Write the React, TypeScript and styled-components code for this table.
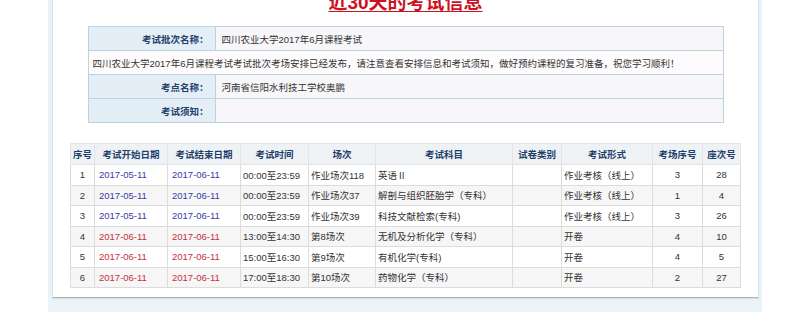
import React from "react";
import styled, { createGlobalStyle } from "styled-components";

const GlobalStyle = createGlobalStyle`
  html, body {
    margin: 0;
    padding: 0;
    background: #ffffff;
    overflow: hidden;
  }
  body {
    font-family: "Liberation Sans", "Noto Sans CJK SC", sans-serif;
    font-size: 9.5px;
    color: #333333;
  }
`;

type Exam = {
  no: number;
  start: string;
  end: string;
  time: string;
  session: string;
  subject: string;
  paper: string;
  form: string;
  room: string;
  seat: string;
  late: boolean;
};

const exams: Exam[] = [
  { no: 1, start: "2017-05-11", end: "2017-06-11", time: "00:00至23:59", session: "作业场次118", subject: "英语Ⅱ", paper: "", form: "作业考核（线上）", room: "3", seat: "28", late: false },
  { no: 2, start: "2017-05-11", end: "2017-06-11", time: "00:00至23:59", session: "作业场次37", subject: "解剖与组织胚胎学（专科）", paper: "", form: "作业考核（线上）", room: "1", seat: "4", late: false },
  { no: 3, start: "2017-05-11", end: "2017-06-11", time: "00:00至23:59", session: "作业场次39", subject: "科技文献检索(专科)", paper: "", form: "作业考核（线上）", room: "3", seat: "26", late: false },
  { no: 4, start: "2017-06-11", end: "2017-06-11", time: "13:00至14:30", session: "第8场次", subject: "无机及分析化学（专科）", paper: "", form: "开卷", room: "4", seat: "10", late: true },
  { no: 5, start: "2017-06-11", end: "2017-06-11", time: "15:00至16:30", session: "第9场次", subject: "有机化学(专科)", paper: "", form: "开卷", room: "4", seat: "5", late: true },
  { no: 6, start: "2017-06-11", end: "2017-06-11", time: "17:00至18:30", session: "第10场次", subject: "药物化学（专科）", paper: "", form: "开卷", room: "2", seat: "27", late: true },
];

const columns = [
  { title: "序号", width: 24 },
  { title: "考试开始日期", width: 73 },
  { title: "考试结束日期", width: 73 },
  { title: "考试时间", width: 68 },
  { title: "场次", width: 67 },
  { title: "考试科目", width: 137 },
  { title: "试卷类别", width: 49 },
  { title: "考试形式", width: 91 },
  { title: "考场序号", width: 50 },
  { title: "座次号", width: 38 },
];

const App = () => {
  return (
    <>
      <GlobalStyle />
      <Frame>
        <Panel>
          <Title>近30天的考试信息</Title>
          <InfoTable>
            <tbody>
              <tr>
                <LabelCell>考试批次名称：</LabelCell>
                <ValueCell>四川农业大学2017年6月课程考试</ValueCell>
              </tr>
              <tr>
                <NoticeCell colSpan={2}>
                  四川农业大学2017年6月课程考试考试批次考场安排已经发布，请注意查看安排信息和考试须知，做好预约课程的复习准备，祝您学习顺利！
                </NoticeCell>
              </tr>
              <tr>
                <LabelCell>考点名称：</LabelCell>
                <ValueCell>河南省信阳水利技工学校奥鹏</ValueCell>
              </tr>
              <tr>
                <LabelCell>考试须知：</LabelCell>
                <ValueCell></ValueCell>
              </tr>
            </tbody>
          </InfoTable>
          <ExamTable>
            <colgroup>
              {columns.map((c) => (
                <col key={c.title} style={{ width: c.width }} />
              ))}
            </colgroup>
            <thead>
              <tr>
                {columns.map((c) => (
                  <HeadCell key={c.title}>{c.title}</HeadCell>
                ))}
              </tr>
            </thead>
            <tbody>
              {exams.map((e) => (
                <Row key={e.no}>
                  <Cell $align="center">{e.no}</Cell>
                  <DateCell $late={e.late}>{e.start}</DateCell>
                  <DateCell $late={e.late}>{e.end}</DateCell>
                  <Cell>{e.time}</Cell>
                  <Cell>{e.session}</Cell>
                  <Cell>{e.subject}</Cell>
                  <Cell>{e.paper}</Cell>
                  <Cell>{e.form}</Cell>
                  <Cell $align="center">{e.room}</Cell>
                  <Cell $align="center">{e.seat}</Cell>
                </Row>
              ))}
            </tbody>
          </ExamTable>
        </Panel>
      </Frame>
    </>
  );
};

export default App;

const Frame = styled.div`
  width: 707px;
  margin: -9px 0 0 48px;
  padding: 0 3px 14px 4px;
  background: #eaf3f7;
`;

const Panel = styled.div`
  background: #ffffff;
  border-left: 1px solid #d6e4ec;
  border-right: 1px solid #d6e4ec;
  border-bottom: 1px solid #aab6bb;
  box-shadow: 0 1px 1px rgba(0, 0, 0, 0.08);
  padding: 0 0 9px;
  display: flex;
  flex-direction: column;
  align-items: center;
`;

const Title = styled.div`
  font-size: 19px;
  font-weight: 700;
  line-height: 24px;
  color: #cc1122;
  text-decoration: underline;
  text-underline-offset: 2px;
  margin-bottom: 11px;
`;

const InfoTable = styled.table`
  width: 636px;
  border-collapse: collapse;
  border: 1px solid #bcd2dc;
  margin-bottom: 20px;

  td {
    border: 1px solid #bcd2dc;
    height: 23px;
    padding: 0;
  }
`;

const LabelCell = styled.td`
  width: 120px;
  background: #e4eef7;
  color: #22406a;
  font-weight: 700;
  text-align: right;
  padding-right: 6px !important;
`;

const ValueCell = styled.td`
  background: #f7f7f9;
  padding-left: 6px !important;
`;

const NoticeCell = styled.td`
  background: #fdfbfb;
  padding-left: 4px !important;
`;

const ExamTable = styled.table`
  width: 671px;
  table-layout: fixed;
  border-collapse: collapse;
  border: 1px solid #dcdcdc;
`;

const HeadCell = styled.th`
  height: 20px;
  padding: 0;
  background: #eef2f5;
  border: 1px solid #e2e6ea;
  color: #1f3d6b;
  font-weight: 700;
  text-align: center;
  white-space: nowrap;
`;

const Row = styled.tr`
  background: #ffffff;
  &:nth-child(even) {
    background: #f6f6f6;
  }
`;

const Cell = styled.td<{ $align?: "left" | "center" }>`
  height: 19.5px;
  padding: 0 2px;
  border: 1px solid #dcdcdc;
  text-align: ${(p) => p.$align ?? "left"};
  white-space: nowrap;
  overflow: hidden;
`;

const DateCell = styled(Cell)<{ $late: boolean }>`
  padding-left: 4px;
  color: ${(p) => (p.$late ? "#c8303c" : "#3a3aa8")};
`;
